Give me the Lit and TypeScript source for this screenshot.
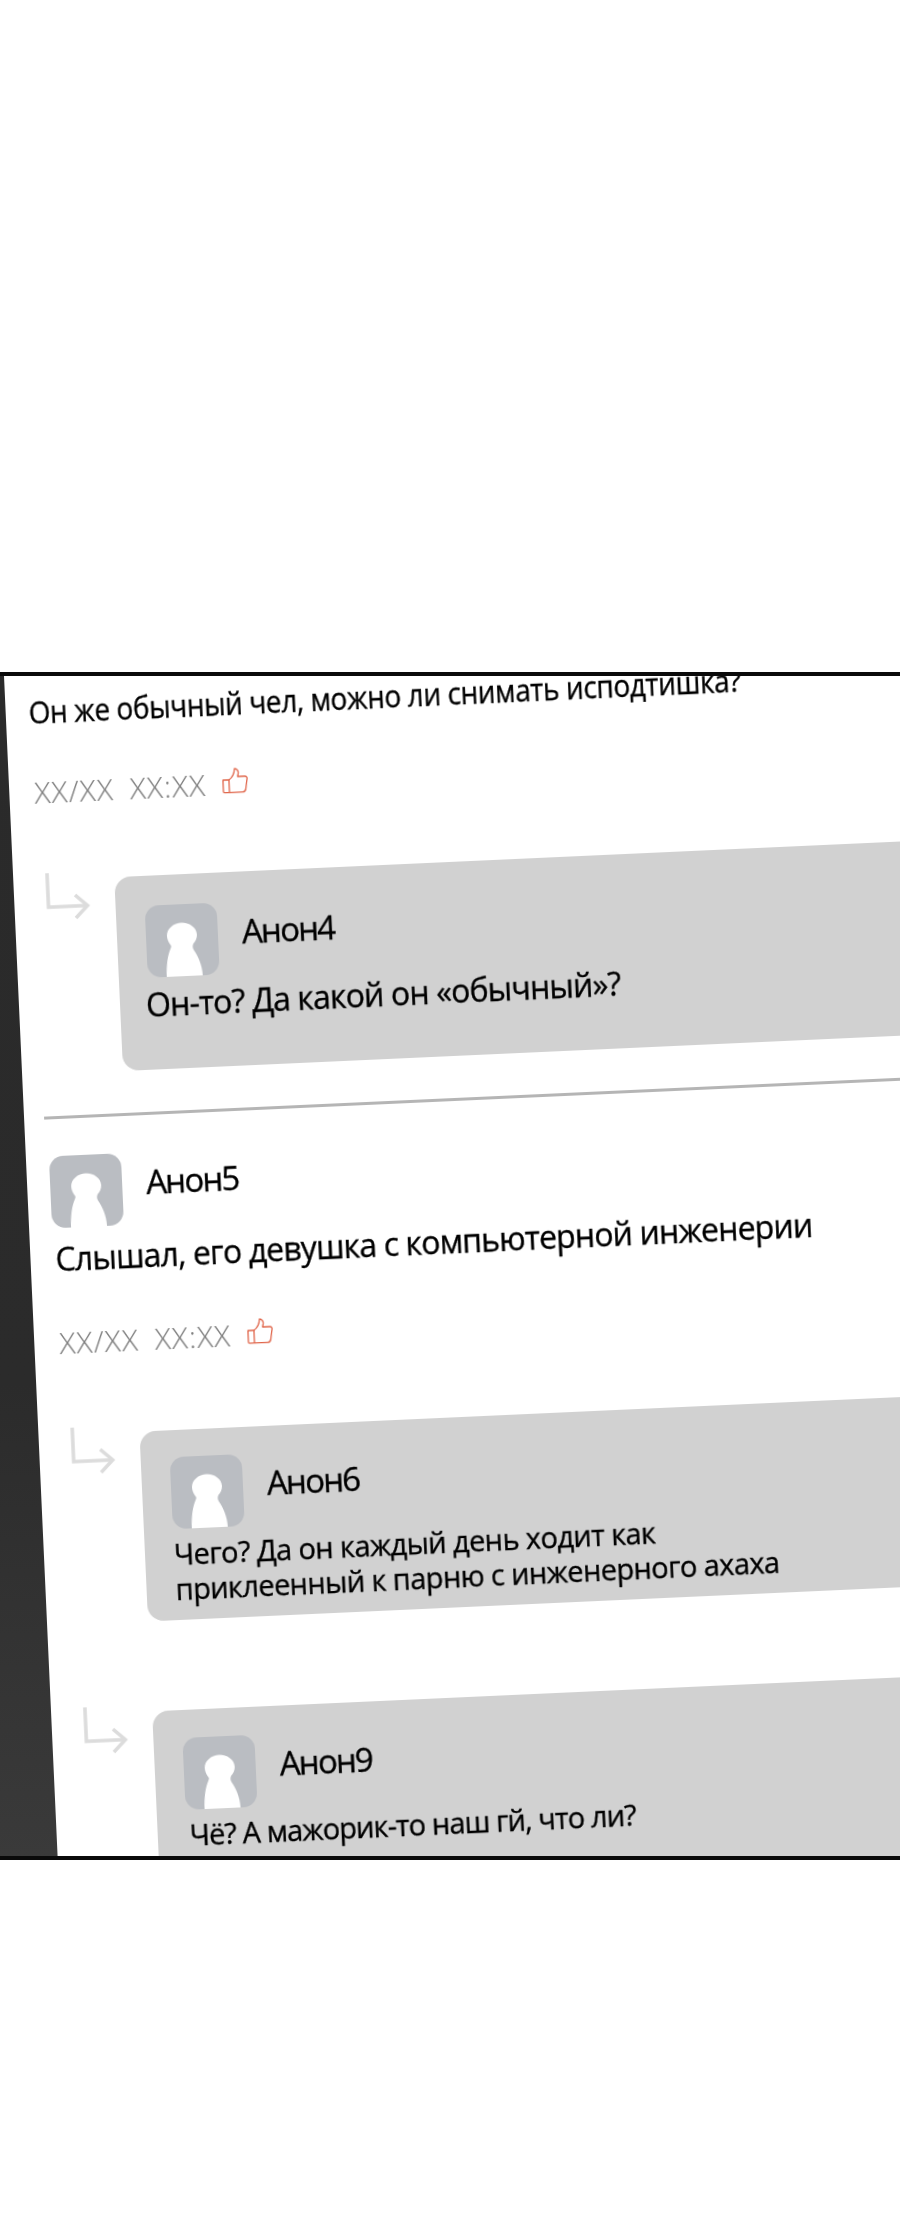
import { LitElement, html, css } from "lit";
import { customElement } from "lit/decorators.js";

const avatar = html`<svg class="avatar" viewBox="0 0 72 72">
  <path fill="#fff" d="M19 72 C19 60 21 50 24 44 C25 42 25 41 24 40 C22 37 21 34 21 31 C21 24 28 18.5 36 18.5 C44 18.5 51 24 51 31 C51 35 49 38 47 40 C46 42 46 44 47 46 C51 52 55 62 55 72 Z"/>
</svg>`;

const thumb = html`<svg class="thumb" viewBox="0 0 26 26" fill="none" stroke="#e0654a" stroke-width="1.3" stroke-linejoin="round">
  <path d="M1 12 H7 V24.6 H2 Q1 24.6 1 23.6 Z"/>
  <path d="M7 12 C10 10 12.5 7 13 1 C15.5 1 17 3.5 16.5 6 L15.8 9 H23 C24.6 9 25.4 10.2 25.1 11.6 L23.4 22 C23 23.8 22 24.6 20.4 24.6 H7"/>
</svg>`;

const arrow = html`<svg class="arrow" viewBox="0 0 44 48" fill="none" stroke="#dcdcdc" stroke-width="3.6">
  <path d="M2 0 V34 H41"/>
  <path d="M29 23 L41 34 L29 46"/>
</svg>`;

const meta = html`<div class="meta"><span>XX/XX</span><span>XX:XX</span>${thumb}</div>`;

@customElement("app-root")
export class AppRoot extends LitElement {
  static styles = css`
    :host { display: block; background: #fff; font-family: "Open Sans", "Noto Sans", sans-serif; color: #000; }
    .page { height: 2226px; padding-top: 672px; box-sizing: border-box; }
    .panel {
      height: 1188px; box-sizing: border-box; overflow: hidden;
      border-top: 4px solid #0a0a0a; border-bottom: 4px solid #0a0a0a;
      background: linear-gradient(180deg, #2a2a2a 0%, #2b2b2b 60%, #3a3a3a 100%);
    }
    .sheet {
      width: 1200px; height: 1400px; background: #fff; margin-left: 4px; box-sizing: border-box;
      transform-origin: 0 0; transform: rotate(-2.6deg); filter: blur(0.35px);
      padding-left: 23px; -webkit-text-stroke: 0.35px #000;
    }
    .text { font-size: 32px; line-height: 40px; letter-spacing: -0.85px; white-space: nowrap; }
    .first { padding-top: 17px; }
    .squeezed { display: inline-block; font-size: 31px; letter-spacing: -0.4px; transform: scaleX(0.9); transform-origin: 0 50%; }
    .meta { display: flex; align-items: center; gap: 16px; color: #808080; font-size: 30px; line-height: 40px; font-weight: 300; letter-spacing: 0.95px; margin-left: 2px; -webkit-text-stroke: 0; }
    .thumb { width: 26px; height: 26px; margin-top: -6px; }
    .m1 { margin-top: 41px; }
    .reply { display: flex; position: relative; margin-left: 78px; background: #d1d1d1; border-radius: 16px; height: 190px; width: 1090px; box-sizing: border-box; padding: 27px 29px 0; flex-direction: column; }
    .r1 { margin-top: 68px; height: 194px; padding-top: 30px; }
    .r2 { margin-top: 72px; }
    .r3 { margin-top: 90px; padding-top: 28px; }
    .arrow { position: absolute; left: -69px; top: -7px; width: 44px; height: 48px; }
    .head { display: flex; align-items: center; gap: 24px; }
    .avatar { width: 72px; height: 72px; background: #babdc2; border-radius: 14px; flex: none; }
    .name { font-size: 33px; line-height: 40px; letter-spacing: -1.8px; margin-bottom: 13px; }
    .small { font-size: 29px; line-height: 35px; letter-spacing: -0.6px; white-space: nowrap; margin-top: 7px; }
    .tight { letter-spacing: -0.9px; margin-left: 3px; }
    .reply .text { margin-top: 7px; margin-left: -3px; }
    .divider { height: 3px; background: #b5b5b5; margin-top: 42px; margin-left: -3px; }
    .block { margin-top: 37px; }
    .block .text { margin-top: 11px; margin-left: 2px; }
    .m2 { margin-top: 44px; }
  `;

  render() {
    return html`<div class="page"><div class="panel"><div class="sheet">
      <div class="text first"><span class="squeezed">Он же обычный чел, можно ли снимать исподтишка?</span></div>
      <div class="m1">${meta}</div>
      <div class="reply r1">${arrow}
        <div class="head">${avatar}<div class="name">Анон4</div></div>
        <div class="text">Он-то? Да какой он «обычный»?</div>
      </div>
      <div class="divider"></div>
      <div class="block">
        <div class="head">${avatar}<div class="name">Анон5</div></div>
        <div class="text">Слышал, его девушка с компьютерной инженерии</div>
      </div>
      <div class="m2">${meta}</div>
      <div class="reply r2">${arrow}
        <div class="head">${avatar}<div class="name">Анон6</div></div>
        <div class="small">Чего? Да он каждый день ходит как<br>приклеенный к парню с инженерного ахаха</div>
      </div>
      <div class="reply r3">${arrow}
        <div class="head">${avatar}<div class="name">Анон9</div></div>
        <div class="small tight">Чё? А мажорик-то наш гй, что ли?</div>
      </div>
    </div></div></div>`;
  }
}
